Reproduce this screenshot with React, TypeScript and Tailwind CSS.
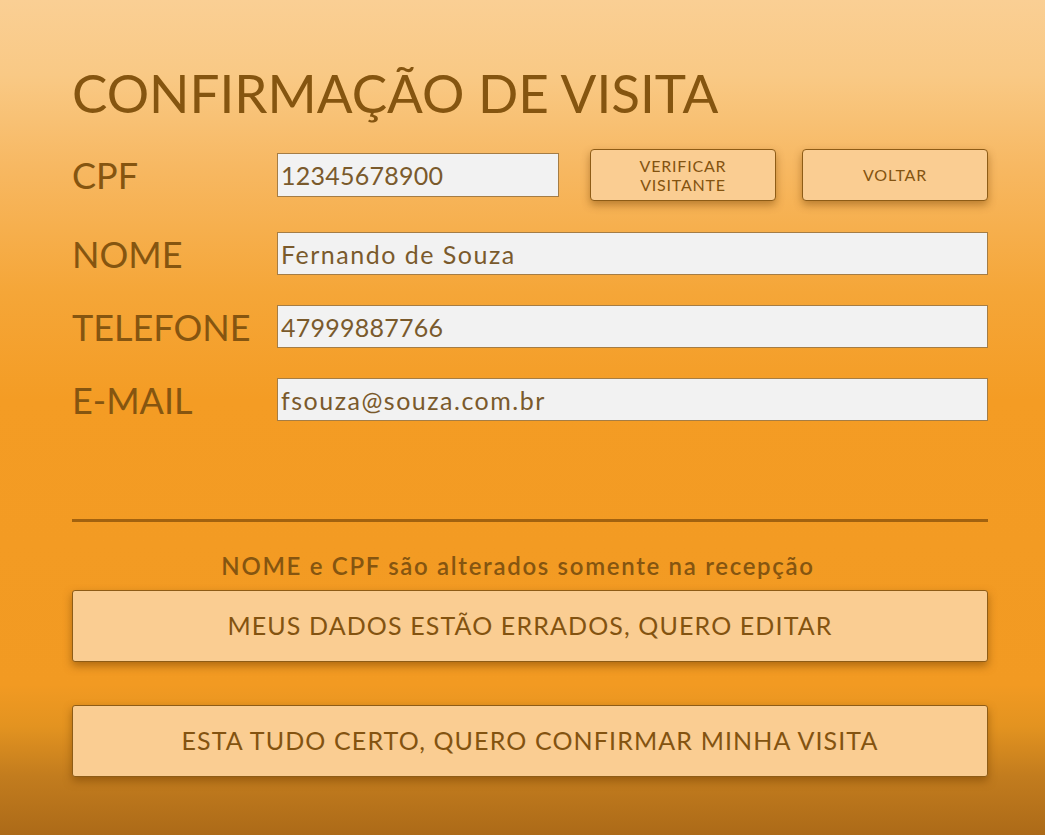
import React from "react";

const brown = "text-[#855510]";

function Field({ label, value, digits }: { label: string; value: string; digits?: boolean }) {
    return (
        <div className="flex items-center h-[43px]">
            <label className={`w-[205px] shrink-0 text-[36px] leading-none ${brown}`}>{label}</label>
            <input
                readOnly
                value={value}
                className={`flex-1 h-[43px] bg-[#f2f2f2] border border-[#a57d45] px-[3px] text-[25px] ${digits ? "tracking-[0.01em]" : "tracking-[0.06em]"} text-[#7a5a2c] outline-none`}
            />
        </div>
    );
}

function BigButton({ children }: { children: React.ReactNode }) {
    return (
        <button className="w-full h-[72px] bg-[#facd92] border border-[#8e5c16] rounded-[3px] shadow-[0_4px_8px_rgba(110,60,0,0.5)] text-[25px] tracking-[0.045em] text-[#835310]">
            {children}
        </button>
    );
}

export default function App() {
    return (
        <div className="min-h-screen w-full bg-[linear-gradient(to_bottom,#facf94_0%,#f9c985_9%,#f7b862_20%,#f5a638_35%,#f49c24_48%,#f29a22_82%,#e39320_87%,#c27c1e_93%,#ac6a18_100%)] font-['Lato',sans-serif]">
            <div className="px-[72px] pt-[65px] w-[1060px]">
                <h1 className={`text-[53px] leading-[56px] ${brown}`}>CONFIRMAÇÃO DE VISITA</h1>

                <div className="mt-[28px] flex items-center h-[52px]">
                    <label className={`w-[205px] shrink-0 text-[36px] leading-none ${brown}`}>CPF</label>
                    <input
                        readOnly
                        value="12345678900"
                        className="w-[282px] h-[44px] bg-[#f2f2f2] border border-[#a57d45] px-[3px] text-[25px] tracking-[0.01em] text-[#7a5a2c] outline-none"
                    />
                    <button className="ml-[31px] w-[186px] h-[52px] bg-[#facd92] border border-[#8e5c16] rounded-[4px] shadow-[0_4px_8px_rgba(110,60,0,0.45)] text-[16px] tracking-[0.05em] leading-[19px] text-[#835310]">
                        VERIFICAR
                        <br />
                        VISITANTE
                    </button>
                    <button className="ml-[26px] w-[186px] h-[52px] bg-[#facd92] border border-[#8e5c16] rounded-[4px] shadow-[0_4px_8px_rgba(110,60,0,0.45)] text-[16px] tracking-[0.05em] text-[#835310]">
                        VOLTAR
                    </button>
                </div>

                <div className="w-[916px] mt-[31px] flex flex-col gap-[30px]">
                    <Field label="NOME" value="Fernando de Souza" />
                    <Field label="TELEFONE" value="47999887766" digits />
                    <Field label="E-MAIL" value="fsouza@souza.com.br" />
                </div>

                <div className="w-[916px] mt-[98px] h-[3px] bg-[#a2620f]" />

                <p className={`w-[916px] mt-[29px] pr-[24px] text-center text-[24px] font-semibold tracking-[0.07em] leading-[30px] ${brown}`}>
                    NOME e CPF são alterados somente na recepção
                </p>

                <div className="w-[916px] mt-[9px]">
                    <BigButton>MEUS DADOS ESTÃO ERRADOS, QUERO EDITAR</BigButton>
                </div>
                <div className="w-[916px] mt-[43px]">
                    <BigButton>ESTA TUDO CERTO, QUERO CONFIRMAR MINHA VISITA</BigButton>
                </div>
            </div>
        </div>
    );
}
